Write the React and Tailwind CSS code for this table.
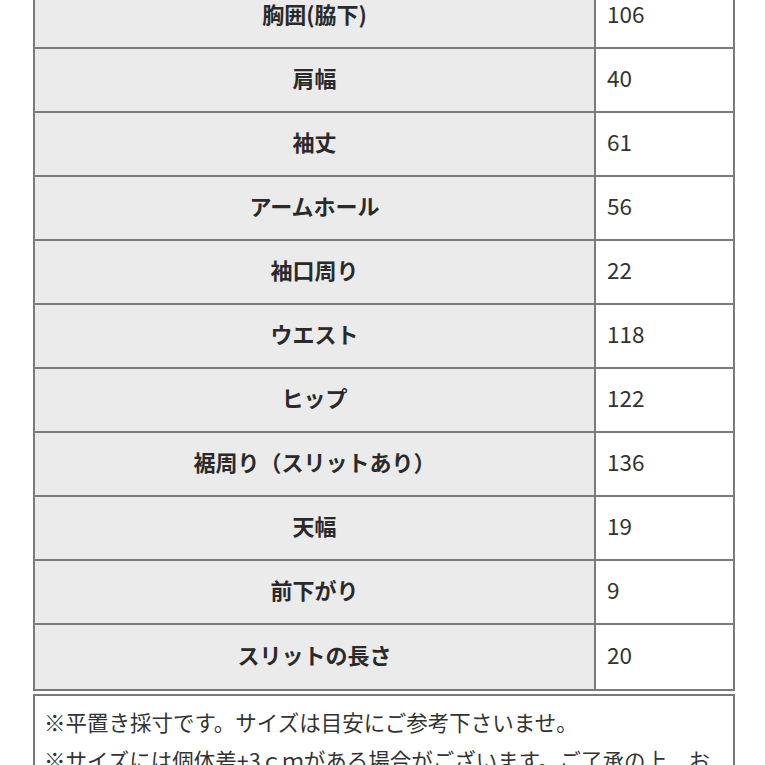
import React from 'react';

const rows = [
  ['胸囲(脇下)', '106'],
  ['肩幅', '40'],
  ['袖丈', '61'],
  ['アームホール', '56'],
  ['袖口周り', '22'],
  ['ウエスト', '118'],
  ['ヒップ', '122'],
  ['裾周り（スリットあり）', '136'],
  ['天幅', '19'],
  ['前下がり', '9'],
  ['スリットの長さ', '20'],
];

export default function App() {
  return (
    <div
      className="min-h-[765px] bg-white overflow-hidden text-[#333] text-[22px]"
      style={{ fontFamily: '"Noto Sans CJK JP", "Noto Sans", sans-serif' }}
    >
      {/* size table */}
      <div className="ml-[33px] w-[702px] -mt-[17px] border-2 border-[#7a7a7a]">
        {rows.map(([label, value], i) => (
          <div
            key={label}
            className={`grid grid-cols-[561px_1fr] h-[64px] ${i < rows.length - 1 ? 'border-b-2 border-[#7a7a7a]' : ''}`}
          >
            <div className="flex items-center justify-center bg-[#ebebeb] border-r-2 border-[#7a7a7a] font-bold text-[#2a2a2a] pb-[5px]">
              {label}
            </div>
            <div className="flex items-center pl-[11px] pb-[5px] bg-white text-[22.5px]">{value}</div>
          </div>
        ))}
      </div>

      {/* notes */}
      <div className="ml-[33px] w-[702px] mt-[3px] border-2 border-[#7a7a7a] pt-[7px] pl-[9px] pr-[2px] leading-[38px] text-[21.5px]">
        <p>※平置き採寸です。サイズは目安にご参考下さいませ。</p>
        <p>※サイズには個体差+3ｃｍがある場合がございます。ご了承の上、お買い求めください。</p>
      </div>
    </div>
  );
}
